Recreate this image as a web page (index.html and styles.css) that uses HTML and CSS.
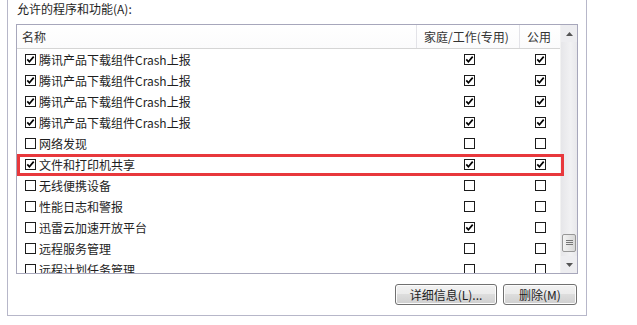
FILE: index.html
```html
<!DOCTYPE html>
<html lang="zh-CN">
<head>
<meta charset="utf-8">
<title>允许的程序和功能</title>
<link rel="stylesheet" href="styles.css">
</head>
<body>
<svg width="0" height="0" class="defs">
  <defs>
    <symbol id="on" viewBox="0 0 11 11">
      <rect x="0.5" y="0.5" width="10" height="10" fill="#fff" stroke="#1c1c1c"/>
      <path d="M2.3 5.4 L4.4 7.8 L8.7 2.6" fill="none" stroke="#000" stroke-width="1.7"/>
    </symbol>
    <symbol id="off" viewBox="0 0 11 11">
      <rect x="0.5" y="0.5" width="10" height="10" fill="#fff" stroke="#1c1c1c"/>
    </symbol>
  </defs>
</svg>
<div class="group">
  <div class="label">允许的程序和功能(A):</div>
  <div class="list">
    <div class="main">
      <div class="head">
        <div class="c1 h">名称</div>
        <div class="c2 h">家庭/工作(专用)</div>
        <div class="c3 h">公用</div>
      </div>
      <div class="rows">
        <div class="row"><div class="c1"><svg class="cb"><use href="#on"/></svg><span>腾讯产品下载组件Crash上报</span></div><div class="c2"><svg class="cb"><use href="#on"/></svg></div><div class="c3"><svg class="cb"><use href="#on"/></svg></div></div>
        <div class="row"><div class="c1"><svg class="cb"><use href="#on"/></svg><span>腾讯产品下载组件Crash上报</span></div><div class="c2"><svg class="cb"><use href="#on"/></svg></div><div class="c3"><svg class="cb"><use href="#on"/></svg></div></div>
        <div class="row"><div class="c1"><svg class="cb"><use href="#on"/></svg><span>腾讯产品下载组件Crash上报</span></div><div class="c2"><svg class="cb"><use href="#on"/></svg></div><div class="c3"><svg class="cb"><use href="#on"/></svg></div></div>
        <div class="row"><div class="c1"><svg class="cb"><use href="#on"/></svg><span>腾讯产品下载组件Crash上报</span></div><div class="c2"><svg class="cb"><use href="#on"/></svg></div><div class="c3"><svg class="cb"><use href="#on"/></svg></div></div>
        <div class="row"><div class="c1"><svg class="cb"><use href="#off"/></svg><span>网络发现</span></div><div class="c2"><svg class="cb"><use href="#off"/></svg></div><div class="c3"><svg class="cb"><use href="#off"/></svg></div></div>
        <div class="row marked"><div class="c1"><svg class="cb"><use href="#on"/></svg><span>文件和打印机共享</span></div><div class="c2"><svg class="cb"><use href="#on"/></svg></div><div class="c3"><svg class="cb"><use href="#on"/></svg></div></div>
        <div class="row"><div class="c1"><svg class="cb"><use href="#off"/></svg><span>无线便携设备</span></div><div class="c2"><svg class="cb"><use href="#off"/></svg></div><div class="c3"><svg class="cb"><use href="#off"/></svg></div></div>
        <div class="row"><div class="c1"><svg class="cb"><use href="#off"/></svg><span>性能日志和警报</span></div><div class="c2"><svg class="cb"><use href="#off"/></svg></div><div class="c3"><svg class="cb"><use href="#off"/></svg></div></div>
        <div class="row"><div class="c1"><svg class="cb"><use href="#off"/></svg><span>迅雷云加速开放平台</span></div><div class="c2"><svg class="cb"><use href="#on"/></svg></div><div class="c3"><svg class="cb"><use href="#off"/></svg></div></div>
        <div class="row"><div class="c1"><svg class="cb"><use href="#off"/></svg><span>远程服务管理</span></div><div class="c2"><svg class="cb"><use href="#off"/></svg></div><div class="c3"><svg class="cb"><use href="#off"/></svg></div></div>
        <div class="row"><div class="c1"><svg class="cb"><use href="#off"/></svg><span>远程计划任务管理</span></div><div class="c2"><svg class="cb"><use href="#off"/></svg></div><div class="c3"><svg class="cb"><use href="#off"/></svg></div></div>
      </div>
    </div>
    <div class="scroll">
      <div class="arrow"><svg width="7" height="4" viewBox="0 0 7 4"><path d="M0 4 L3.5 0 L7 4 Z" fill="#555"/></svg></div>
      <div class="track">
        <div class="thumb">
          <svg width="7" height="6" viewBox="0 0 7 6"><path d="M0 0.5H7M0 2.5H7M0 4.5H7" stroke="#777" stroke-width="1"/></svg>
        </div>
      </div>
      <div class="arrow"><svg width="7" height="4" viewBox="0 0 7 4"><path d="M0 0 L3.5 4 L7 0 Z" fill="#555"/></svg></div>
    </div>
  </div>
  <div class="buttons">
    <button class="btn wide">详细信息(L)...</button>
    <button class="btn">删除(M)</button>
  </div>
</div>
</body>
</html>
```

FILE: styles.css
```css
html, body {
  margin: 0;
  padding: 0;
  background: #fff;
}
body {
  font-family: "Microsoft YaHei", "Noto Sans CJK SC", "Noto Sans", sans-serif;
  font-size: 12px;
  color: #1e1e1e;
}
.defs {
  position: absolute;
  width: 0;
  height: 0;
}
.group {
  margin-left: 7px;
  border: 1px solid #b7b7c9;
  border-top: none;
  padding: 0 8px 10px 8px;
  box-sizing: content-box;
  width: 562px;
}
.label {
  height: 24px;
  line-height: 18px;
  padding-left: 1px;
  box-sizing: border-box;
}
.list {
  width: 562px;
  height: 250px;
  box-sizing: border-box;
  border: 1px solid #a7a7bb;
  display: flex;
  overflow: hidden;
  position: relative;
}
.main {
  width: 543px;
  display: flex;
  flex-direction: column;
}
.head {
  display: flex;
  height: 23px;
  border-bottom: 1px solid #d5d5d5;
  background: linear-gradient(#ffffff, #fbfbfc);
  flex: none;
}
.h {
  line-height: 22px;
  color: #333;
}
.head .c1 {
  padding-left: 5px;
  border-right: 1px solid #e3e3e8;
}
.head .c2 {
  border-right: 1px solid #e3e3e8;
  padding-left: 7px;
  justify-content: flex-start;
}
.head .c3 {
  padding-left: 7px;
  justify-content: flex-start;
}
.c1 {
  width: 400px;
  box-sizing: border-box;
  display: flex;
  align-items: center;
}
.c2 {
  width: 103px;
  box-sizing: border-box;
  display: flex;
  align-items: center;
  justify-content: center;
}
.c3 {
  width: 40px;
  box-sizing: border-box;
  display: flex;
  align-items: center;
  justify-content: center;
}
.rows {
  display: flex;
  flex-direction: column;
}
.row {
  display: flex;
  height: 21px;
  flex: none;
}
.row .c1 {
  padding-left: 8px;
  gap: 3px;
}
.row .c2 {
  padding-left: 1px;
}
.row .c3 {
  padding-left: 1px;
}
.cb {
  width: 11px;
  height: 11px;
  flex: none;
}
.row span {
  line-height: 21px;
  white-space: nowrap;
}
.marked {
  position: relative;
}
.marked::after {
  content: "";
  position: absolute;
  left: 0;
  top: 0;
  right: -4px;
  bottom: -1px;
  border: 3px solid #e8383c;
  z-index: 2;
  pointer-events: none;
}
.scroll {
  width: 17px;
  display: flex;
  flex-direction: column;
  background: #ededf0;
  border-left: 1px solid #f2f2f2;
  box-sizing: border-box;
}
.arrow {
  height: 17px;
  display: flex;
  align-items: center;
  justify-content: center;
  flex: none;
}
.track {
  flex: 1;
  display: flex;
  flex-direction: column;
  justify-content: flex-end;
  padding-bottom: 4px;
  background: linear-gradient(90deg, #e6e6e9, #f1f1f3 60%, #e8e8eb);
}
.thumb {
  height: 18px;
  margin: 0 1px;
  border: 1px solid #979797;
  border-radius: 2px;
  background: linear-gradient(90deg, #f3f3f3, #e6e6e6 50%, #d8d8d8);
  display: flex;
  align-items: center;
  justify-content: center;
  box-sizing: border-box;
}
.buttons {
  display: flex;
  justify-content: flex-end;
  gap: 6px;
  margin-top: 10px;
  padding-right: 1px;
}
.btn {
  height: 21px;
  width: 74px;
  padding: 0;
  font-family: "Microsoft YaHei", "Noto Sans CJK SC", "Noto Sans", sans-serif;
  font-size: 12px;
  color: #1e1e1e;
  border: 1px solid #707070;
  border-radius: 3px;
  background: linear-gradient(#f2f2f2 0%, #ebebeb 49%, #dddddd 50%, #cfcfcf 100%);
  box-shadow: inset 0 0 0 1px #fcfcfc;
  line-height: 19px;
}
.btn.wide {
  width: 102px;
}
```
